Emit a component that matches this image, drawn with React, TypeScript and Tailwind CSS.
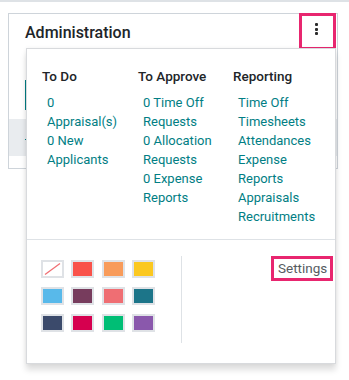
const todo = [["0", "Appraisal(s)"], ["0 New", "Applicants"]];
const approve = [["0 Time Off", "Requests"], ["0 Allocation", "Requests"], ["0 Expense", "Reports"]];
const reporting = [["Time Off"], ["Timesheets"], ["Attendances"], ["Expense", "Reports"], ["Appraisals"], ["Recruitments"]];

const colors = [
  "none",
  "#f9524a",
  "#f89b5a",
  "#fbc820",
  "#58b9ea",
  "#773c5d",
  "#ef6e73",
  "#1c7589",
  "#3b4a6b",
  "#d6004f",
  "#00be75",
  "#8a58ac",
];

function Column({ title, items, w }: { title: string; items: string[][]; w: string }) {
  return (
    <div className={w}>
      <h3 className="text-[13.5px] leading-[20px] font-medium text-[#212529]">{title}</h3>
      <div className="mt-[7px] pl-[5px]">
        {items.map((lines, i) => (
          <a key={i} className="block text-[13px] leading-[19px] text-[#017e84] whitespace-nowrap">
            {lines.map((l, j) => (
              <span key={j} className="block">
                {l}
              </span>
            ))}
          </a>
        ))}
      </div>
    </div>
  );
}

function Swatch({ color }: { color: string }) {
  return (
    <div className="w-[23px] h-[18px] border-2 border-[#dfe2e6] bg-white">
      {color === "none" ? (
        <svg viewBox="0 0 19 14" className="w-full h-full">
          <line x1="2" y1="12.5" x2="17" y2="1.5" stroke="#f06f74" strokeWidth="1.3" />
        </svg>
      ) : (
        <div className="w-full h-full" style={{ background: color }} />
      )}
    </div>
  );
}

export default function App() {
  return (
    <div className="w-[349px] h-[380px] bg-white overflow-hidden" style={{ fontFamily: "Roboto, 'Noto Sans', sans-serif" }}>
      <div className="h-[2px] bg-[#dee2e6]" />
      <div className="relative ml-[8px] mt-[11px] w-[330px] h-[156px] border border-[#ced4da] bg-white">
        <h2 className="pl-[16px] pt-[9px] text-[16px] leading-[20px] font-medium text-[#212529]">Administration</h2>
        <div className="ml-[16px] mt-[37px] w-[2px] h-[30px] bg-[#017e84]" />
        <div className="relative mt-[9px] h-[37px] bg-[#e9ecef]">
          <span className="absolute left-[16px] top-[20px] w-[1px] h-[1px] bg-[#017e84]" />
        </div>

        <button className="absolute right-[1px] top-[-1px] w-[37px] h-[37px] border-[3px] border-[#e8266f] bg-white">
          <span className="flex flex-col gap-[1.5px] pl-[13px] pt-[7px] h-full">
            <span className="w-[3px] h-[3px] rounded-[1px] bg-[#2b2b2b]" />
            <span className="w-[3px] h-[3px] rounded-[1px] bg-[#2b2b2b]" />
            <span className="w-[3px] h-[3px] rounded-[1px] bg-[#2b2b2b]" />
          </span>
        </button>

        <div className="absolute left-[17px] top-[34px] w-[310px] border border-[#d8dadd] bg-white shadow-[0_6px_6px_rgba(0,0,0,0.13),0_0_4px_rgba(0,0,0,0.06)]">
          <div className="flex pl-[15px] pt-[17px] pb-[13px] border-b border-[#dee2e6]">
            <Column title="To Do" items={todo} w="w-[96px]" />
            <Column title="To Approve" items={approve} w="w-[95px]" />
            <Column title="Reporting" items={reporting} w="flex-1" />
          </div>
          <div className="flex pt-[16px] pb-[20px] pl-[14px] pr-[2px]">
            <div className="pt-[4px] grid grid-cols-[repeat(4,23px)] gap-x-[7.3px] gap-y-[9px] self-start">
              {colors.map((c, i) => (
                <Swatch key={i} color={c} />
              ))}
            </div>
            <div className="ml-[26px] w-[1px] h-[87px] bg-[#dee2e6]" />
            <div className="flex-1 flex justify-end items-start">
              <a className="h-[25px] w-[62px] border-[3px] border-[#e8266f] pl-[4px] text-[13.5px] leading-[19px] text-[#565b61]">
                Settings
              </a>
            </div>
          </div>
        </div>
      </div>
    </div>
  );
}
